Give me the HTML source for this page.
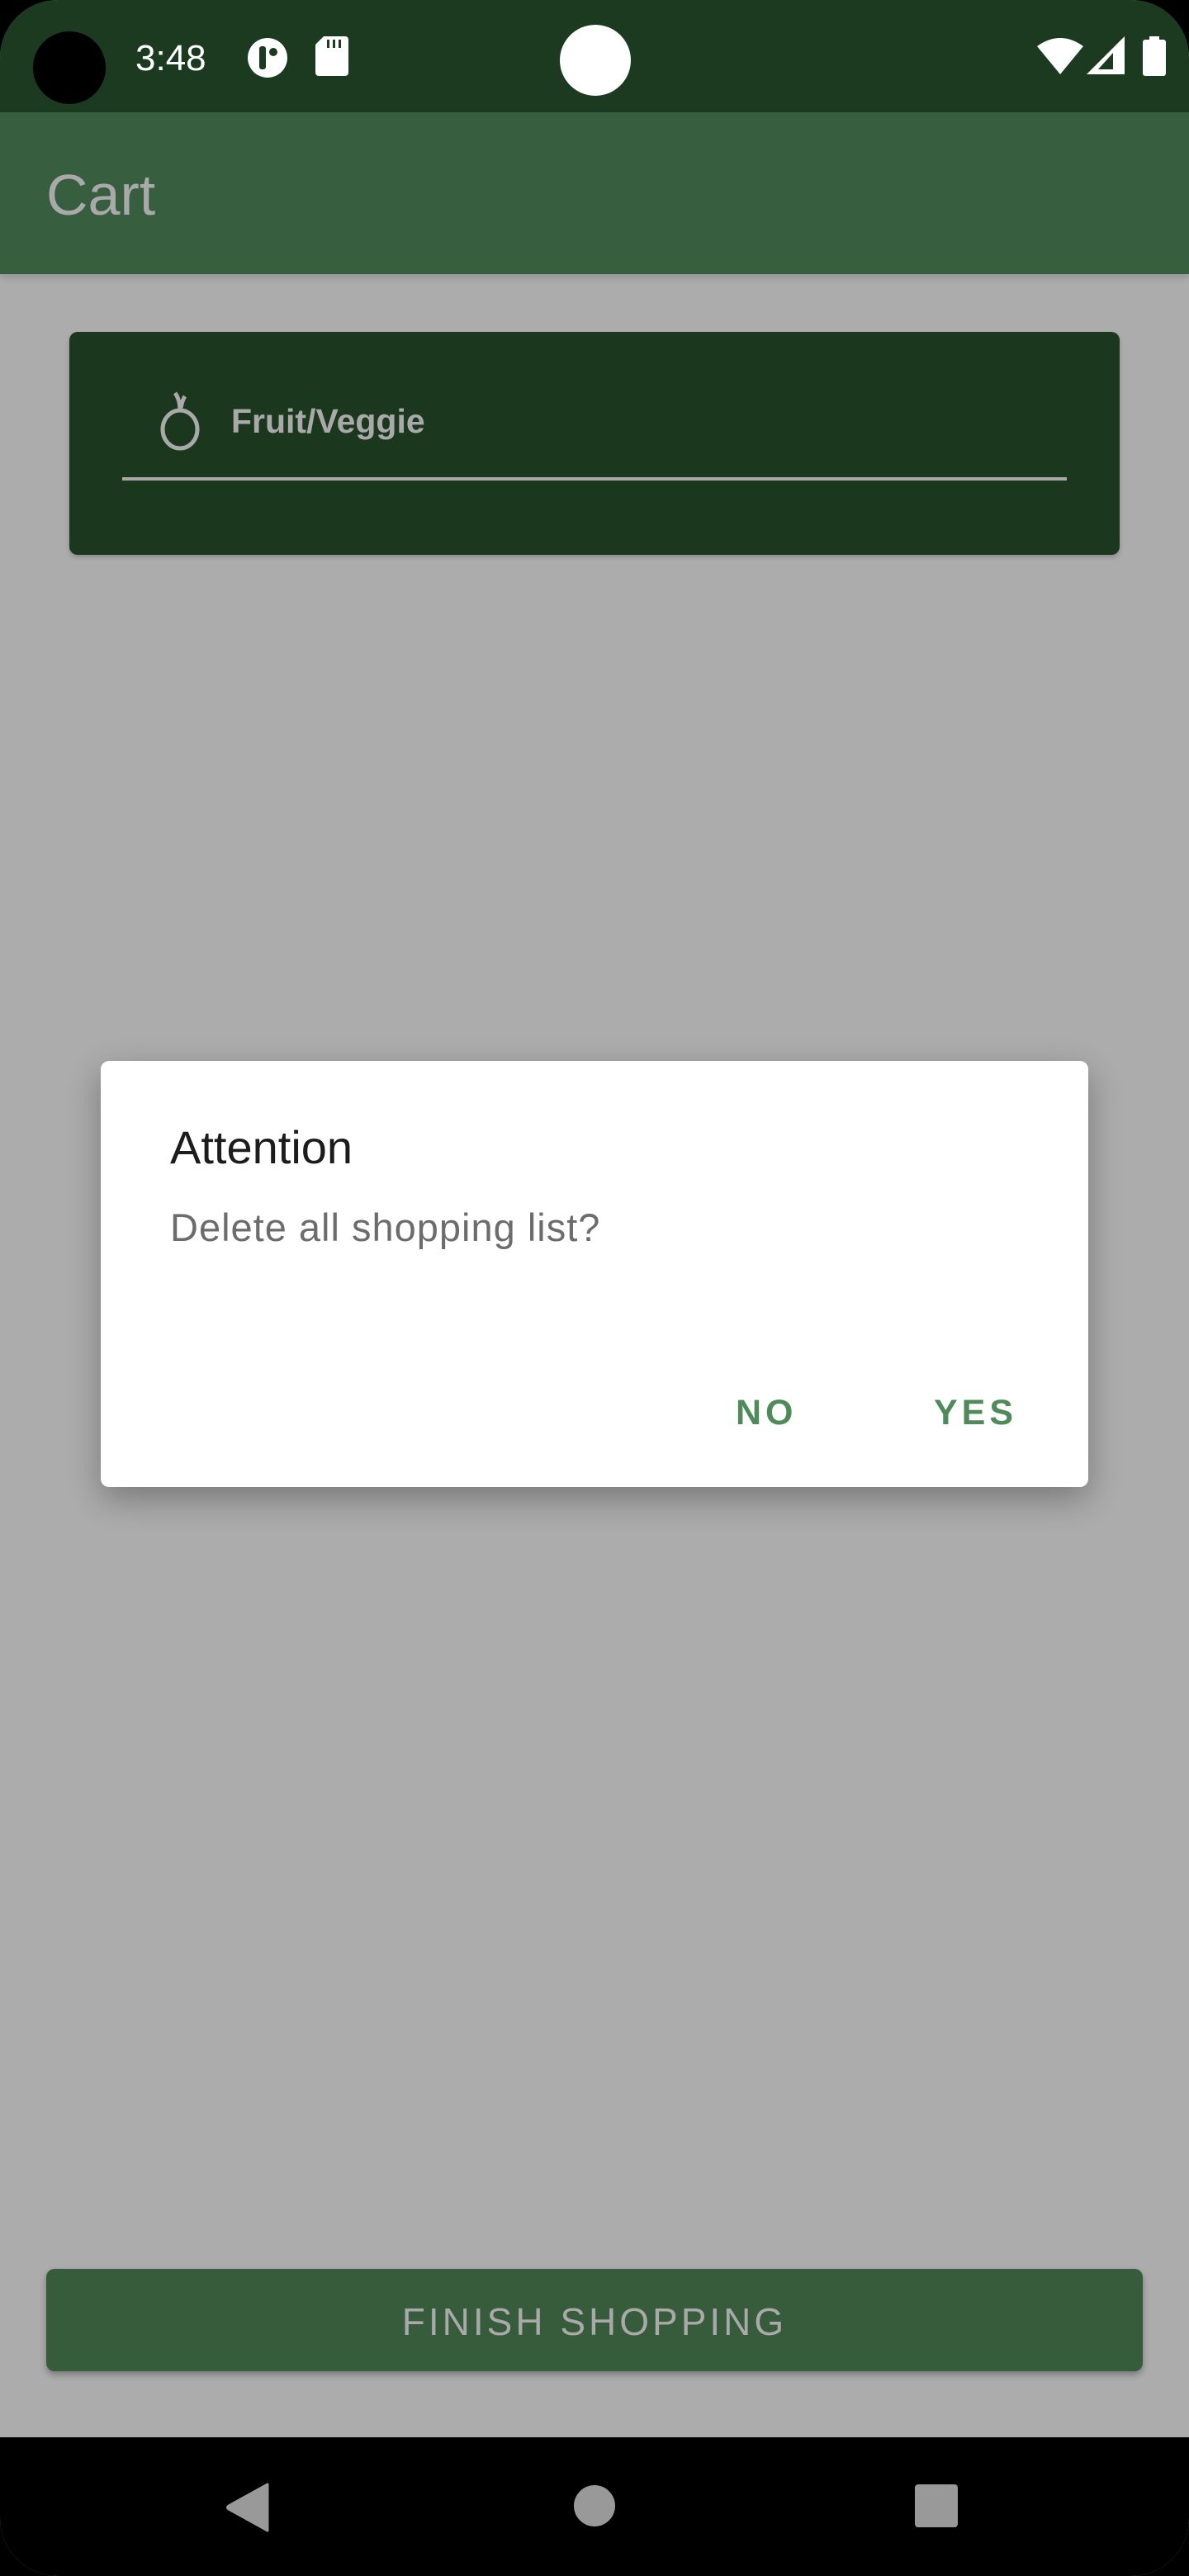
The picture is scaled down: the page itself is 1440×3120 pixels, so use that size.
<!DOCTYPE html>
<html><head><meta charset="utf-8"><style>
html,body{margin:0;padding:0;}
body{width:1440px;height:3120px;position:relative;overflow:hidden;background:#000;font-family:"Liberation Sans",sans-serif;}
.screen{position:absolute;left:0;top:0;width:1440px;height:3120px;border-radius:70px;overflow:hidden;background:#acacac;}
.status{position:absolute;left:0;top:0;width:1440px;height:136px;background:#1b3a1f;}
.appbar{position:absolute;left:0;top:136px;width:1440px;height:196px;background:#375e3f;box-shadow:0 4px 8px rgba(0,0,0,.15);}
.abs{position:absolute;}
</style></head><body>
<div class="screen">
<div class="status">
  <div class="abs" style="left:40px;top:38px;width:88px;height:88px;border-radius:50%;background:#000"></div>
  <div class="abs" style="left:164px;top:46px;color:#fff;font-size:44px;">3:48</div>
  <svg class="abs" style="left:298px;top:44px" width="52" height="52" viewBox="0 0 52 52"><circle cx="26" cy="26" r="24" fill="#fff"/><rect x="16" y="12" width="8" height="28" rx="3" fill="#1b3a1f"/><circle cx="33" cy="19" r="5" fill="#1b3a1f"/></svg>
  <svg class="abs" style="left:382px;top:44px" width="40" height="48" viewBox="0 0 40 48"><path d="M10 0H36a4 4 0 0 1 4 4V44a4 4 0 0 1-4 4H4a4 4 0 0 1-4-4V10z" fill="#fff"/><rect x="14" y="4" width="3" height="10" fill="#1b3a1f"/><rect x="21" y="4" width="3" height="10" fill="#1b3a1f"/><rect x="28" y="4" width="3" height="10" fill="#1b3a1f"/></svg>
  <div class="abs" style="left:678px;top:30px;width:86px;height:86px;border-radius:50%;background:#fff"></div>
  <svg class="abs" style="left:1256px;top:44px" width="56" height="46" viewBox="0 0 56 46"><path d="M0 12Q28-8 56 12L28 46z" fill="#fff"/></svg>
  <svg class="abs" style="left:1316px;top:44px" width="46" height="46" viewBox="0 0 46 46"><path d="M46 0V46H0z" fill="#fff"/><path d="M32 20V40H14z" fill="#1b3a1f"/></svg>
  <svg class="abs" style="left:1384px;top:44px" width="28" height="48" viewBox="0 0 28 48"><rect x="8" y="0" width="12" height="6" fill="#fff"/><rect x="0" y="4" width="28" height="44" rx="3" fill="#fff"/></svg>
</div>
<div class="appbar"><div class="abs" style="left:56px;top:60px;color:#a9a9a9;font-size:70px;">Cart</div></div>

<div class="abs" style="left:84px;top:402px;width:1272px;height:270px;background:#1b381e;border-radius:10px;box-shadow:0 3px 6px rgba(0,0,0,.2)">
  <svg class="abs" style="left:104px;top:68px" width="60" height="76" viewBox="0 0 60 76"><ellipse cx="30" cy="50" rx="21" ry="23" fill="none" stroke="#a9a9a9" stroke-width="5"/><path d="M30 28Q30 14 24 6" fill="none" stroke="#a9a9a9" stroke-width="5"/><path d="M31 24Q33 14 36 10" fill="none" stroke="#a9a9a9" stroke-width="5"/></svg>
  <div class="abs" style="left:196px;top:85px;color:#a9a9a9;font-size:41px;font-weight:bold;">Fruit/Veggie</div>
  <div class="abs" style="left:64px;top:176px;width:1144px;height:4px;background:#a9a9a9"></div>
</div>

<div class="abs" style="left:122px;top:1285px;width:1196px;height:516px;background:#fff;border-radius:10px;box-shadow:0 14px 40px rgba(0,0,0,.3)">
  <div class="abs" style="left:84px;top:72px;color:#1c1c1c;font-size:56px;">Attention</div>
  <div class="abs" style="left:84px;top:174px;color:#6c6c6c;font-size:47px;letter-spacing:1px;">Delete all shopping list?</div>
  <div class="abs" style="left:769px;top:402px;color:#4f8a5b;font-size:43px;font-weight:bold;letter-spacing:5px;">NO</div>
  <div class="abs" style="left:1009px;top:402px;color:#4f8a5b;font-size:43px;font-weight:bold;letter-spacing:5px;">YES</div>
</div>

<div class="abs" style="left:56px;top:2748px;width:1328px;height:124px;background:#365c3c;border-radius:10px;box-shadow:0 4px 8px rgba(0,0,0,.3);color:#a9a9a9;font-size:46px;letter-spacing:4px;text-align:center;line-height:128px;">FINISH SHOPPING</div>

<div class="abs" style="left:0;top:2952px;width:1440px;height:168px;background:#000">
  <svg class="abs" style="left:274px;top:55px" width="54" height="60" viewBox="0 0 54 60"><path d="M50 2V58L3 32Q0 30 3 28z" fill="#999" stroke="#999" stroke-width="3" stroke-linejoin="round"/></svg>
  <div class="abs" style="left:695px;top:58px;width:50px;height:50px;border-radius:50%;background:#999"></div>
  <div class="abs" style="left:1108px;top:57px;width:52px;height:52px;border-radius:4px;background:#999"></div>
</div>
</div>
</body></html>
